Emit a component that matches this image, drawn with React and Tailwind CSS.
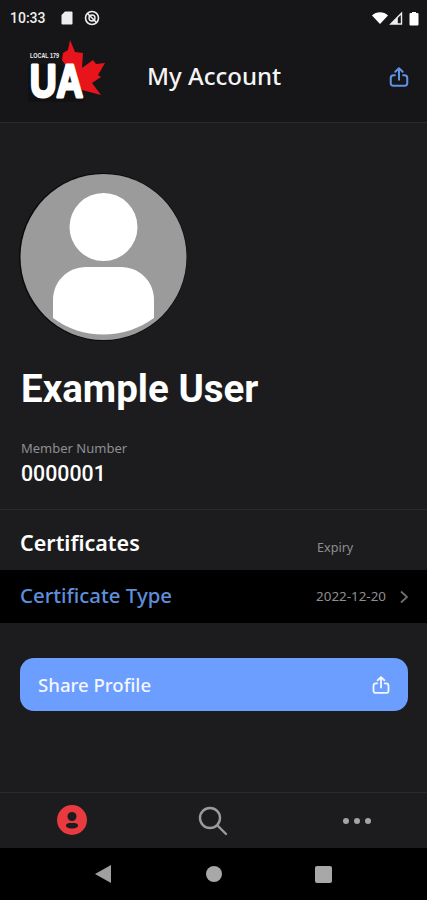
import React from "react";

const noto = "font-['Noto_Sans',sans-serif]";

const ShareIcon = ({ className }) => (
    <svg viewBox="0 0 24 24" fill="none" stroke="currentColor" strokeWidth="2.200" strokeLinecap="round" strokeLinejoin="round" className={className}>
        <path d="M7.500 10H6a3 3 0 0 0-3 3v6a2.500 2.500 0 0 0 2.500 2.500h13A2.500 2.500 0 0 0 21 19v-6a3 3 0 0 0-3-3h-1.500" />
        <path d="M12 15V2.500M8 6.300l4-3.800 4 3.800" />
    </svg>
);

const Logo = () => (
    <svg viewBox="0 0 80 72" className="w-[80px] h-[72px]">
        <path
            fill="#e8141c"
            d="M43 0l5 12 8 1-1 15 11-8 3 4 9-1-7 12 3 2-9 6 9 12-19-5-20-30 1-7 5-3z"
        />
        <path fill="#111111" d="M1 24h30l6 4 21 30-2 4H1z" />
        <text x="3" y="17.500" textLength="29" lengthAdjust="spacingAndGlyphs" fontFamily="Liberation Sans, sans-serif" fontWeight="700" fontSize="6.500" fill="#eeeeee">LOCAL 179</text>
        <text
            x="3"
            y="57"
            textLength="53"
            lengthAdjust="spacingAndGlyphs"
            fontFamily="Liberation Sans, sans-serif"
            fontWeight="700"
            fontSize="46"
            fill="#ffffff"
            stroke="#ffffff"
            strokeWidth="3"
            strokeLinejoin="round"
        >
            UA
        </text>
    </svg>
);

const StatusBar = () => (
    <div className="h-9 flex items-center justify-between pl-[10px] pr-[7px] text-[#eeeeee]">
        <div className="flex items-center">
            <span className="font-['Roboto',sans-serif] font-medium text-[14px] leading-none w-[50px]">10:33</span>
            <svg viewBox="0 0 12 14" className="w-[12px] h-[14px] ml-[1px]">
                <path fill="#eeeeee" d="M4 0.500h6.500a1 1 0 0 1 1 1v11a1 1 0 0 1-1 1h-9a1 1 0 0 1-1-1V4z" />
            </svg>
            <svg viewBox="0 0 16 16" className="w-[16px] h-[16px] ml-[11px]" fill="none" stroke="#eeeeee">
                <circle cx="8" cy="8" r="6.500" strokeWidth="1.600" />
                <circle cx="8" cy="8" r="3" strokeWidth="1.400" />
                <path d="M3.500 3.500l9 9" strokeWidth="1.600" />
            </svg>
        </div>
        <div className="flex items-center">
            <svg viewBox="0 0 16 12" className="w-[16px] h-[12px]">
                <path fill="#ffffff" d="M0 3.500C4.500-.8 11.500-.8 16 3.500L8 12z" />
            </svg>
            <svg viewBox="0 0 14 14" className="w-[14px] h-[14px] ml-[1px]">
                <path fill="none" stroke="#eeeeee" strokeWidth="1.400" d="M1.800 13h10.700V2.200z" />
                <path fill="#eeeeee" d="M1.800 13h7V6z" />
            </svg>
            <svg viewBox="0 0 10 14" className="w-[10px] h-[15px] ml-[6px] mr-[1px]">
                <path fill="#ffffff" d="M3 1.500V.500h4v1h1.500a1 1 0 0 1 1 1V13a1 1 0 0 1-1 1h-7a1 1 0 0 1-1-1V2.500a1 1 0 0 1 1-1z" />
            </svg>
        </div>
    </div>
);

const Header = () => (
    <div className="h-[87px] flex items-center border-b border-[#2b2b2d] bg-[#161618]">
        <div className="ml-[27px] w-[80px] -mt-[6px]">
            <Logo />
        </div>
        <h1 className={`${noto} ml-[40px] -mt-[6px] flex-1 text-[24px] font-medium leading-none text-[#f5f5f5]`}>My Account</h1>
        <ShareIcon className="w-[22px] h-[22px] mr-[17px] -mt-[4px] text-[#5f93e8]" />
    </div>
);

const Avatar = () => (
    <svg viewBox="0 0 168 168" className="w-[168px] h-[168px]">
        <circle cx="84" cy="84" r="84" fill="#0a0a0a" />
        <circle cx="84.500" cy="84" r="83" fill="#9b9b9b" />
        <circle cx="84.500" cy="54" r="34" fill="#ffffff" />
        <path
            fill="#ffffff"
            d="M34 145V127c0-19 15-33 33-33h35c18 0 33 14 33 33v18C105 167 63 167 34 145z"
        />
    </svg>
);

const Profile = () => (
    <div className="pl-[19px] pt-[50px]">
        <Avatar />
        <h2 className="font-['Roboto',sans-serif] mt-[24px] ml-[2px] text-[38.500px] leading-[48px] font-bold text-white">Example User</h2>
        <p className={`${noto} mt-[26px] ml-[2px] text-[13px] leading-[18px] text-[#8e8e90]`}>Member Number</p>
        <p className="font-['Roboto',sans-serif] mt-[3px] ml-[2px] text-[21.300px] leading-[28px] font-medium text-white">0000001</p>
    </div>
);

const Certificates = () => (
    <div className="mt-[21px] border-t border-[#2b2b2d]">
        <div className="h-[60px] flex pl-[20px]">
            <h3 className={`${noto} flex-1 mt-[18px] text-[21.500px] leading-[30px] font-semibold text-white`}>Certificates</h3>
            <span className={`${noto} w-[110px] mt-[29px] text-[12.600px] leading-[17px] text-[#8e8e90]`}>Expiry</span>
        </div>
        <div className="h-[53px] bg-black flex items-center pl-[20px] pr-[18px]">
            <span className={`${noto} flex-1 -mt-[2px] text-[20.400px] leading-none font-medium text-[#5f8fdc]`}>Certificate Type</span>
            <span className={`${noto} text-[13.400px] text-[#8e8e90]`}>2022-12-20</span>
            <svg viewBox="0 0 10 14" className="w-[10px] h-[14px] ml-[13px]" fill="none" stroke="#6e6e70" strokeWidth="1.800">
                <path d="M2 1.500L8 7l-6 5.500" />
            </svg>
        </div>
    </div>
);

const ShareButton = () => (
    <div className="pl-[20px] pr-[19px] mt-[35px]">
        <button className="w-full h-[53px] rounded-[14px] bg-[#6c9eff] flex items-center justify-between pl-[18px] pr-[17px]">
            <span className={`${noto} text-[18.600px] font-medium text-[#f4f6fb]`}>Share Profile</span>
            <ShareIcon className="w-[20px] h-[20px] text-[#f4f6fb]" />
        </button>
    </div>
);

const BottomNav = () => (
    <div className="h-[56px] border-t border-[#2b2b2d] bg-[#1c1c1e] grid grid-cols-3 items-center">
        <div className="flex justify-center pl-[1px] -mt-[1px]">
            <svg viewBox="0 0 30 30" className="w-[30px] h-[30px]">
                <circle cx="15" cy="15" r="15" fill="#e83a3f" />
                <circle cx="15" cy="11.500" r="4.500" fill="#1c1c1e" />
                <path fill="#1c1c1e" d="M9 20.500c0-2 2-2.500 6-2.500s6 .5 6 2.500-2.500 3-6 3-6-1-6-3z" />
            </svg>
        </div>
        <div className="flex justify-center">
            <svg viewBox="0 0 30 30" className="w-[30px] h-[30px]" fill="none" stroke="#9b9b9b" strokeWidth="2.400" strokeLinecap="round">
                <circle cx="12" cy="12" r="10" />
                <path d="M20 20l8 8" />
            </svg>
        </div>
        <div className="flex justify-center gap-[5px] pl-[2px]">
            <span className="w-[6px] h-[6px] rounded-full bg-[#a5a5a5]" />
            <span className="w-[6px] h-[6px] rounded-full bg-[#a5a5a5]" />
            <span className="w-[6px] h-[6px] rounded-full bg-[#a5a5a5]" />
        </div>
    </div>
);

const SystemNav = () => (
    <div className="h-[52px] bg-black flex items-center pl-[95px]">
        <svg viewBox="0 0 16 18" className="w-[16px] h-[18px]">
            <path fill="#a0a0a0" d="M0 9L16 0v18z" />
        </svg>
        <span className="ml-[95px] w-[16px] h-[16px] rounded-full bg-[#a8a8a8]" />
        <span className="ml-[93px] w-[17px] h-[17px] rounded-[2px] bg-[#a8a8a8]" />
    </div>
);

const App = () => {
    return (
        <div className="w-[427px] h-[900px] flex flex-col bg-[#1c1c1e] overflow-hidden">
            <div className="bg-[#161618]">
                <StatusBar />
            </div>
            <Header />
            <Profile />
            <Certificates />
            <ShareButton />
            <div className="flex-1" />
            <BottomNav />
            <SystemNav />
        </div>
    );
};

export default App;
